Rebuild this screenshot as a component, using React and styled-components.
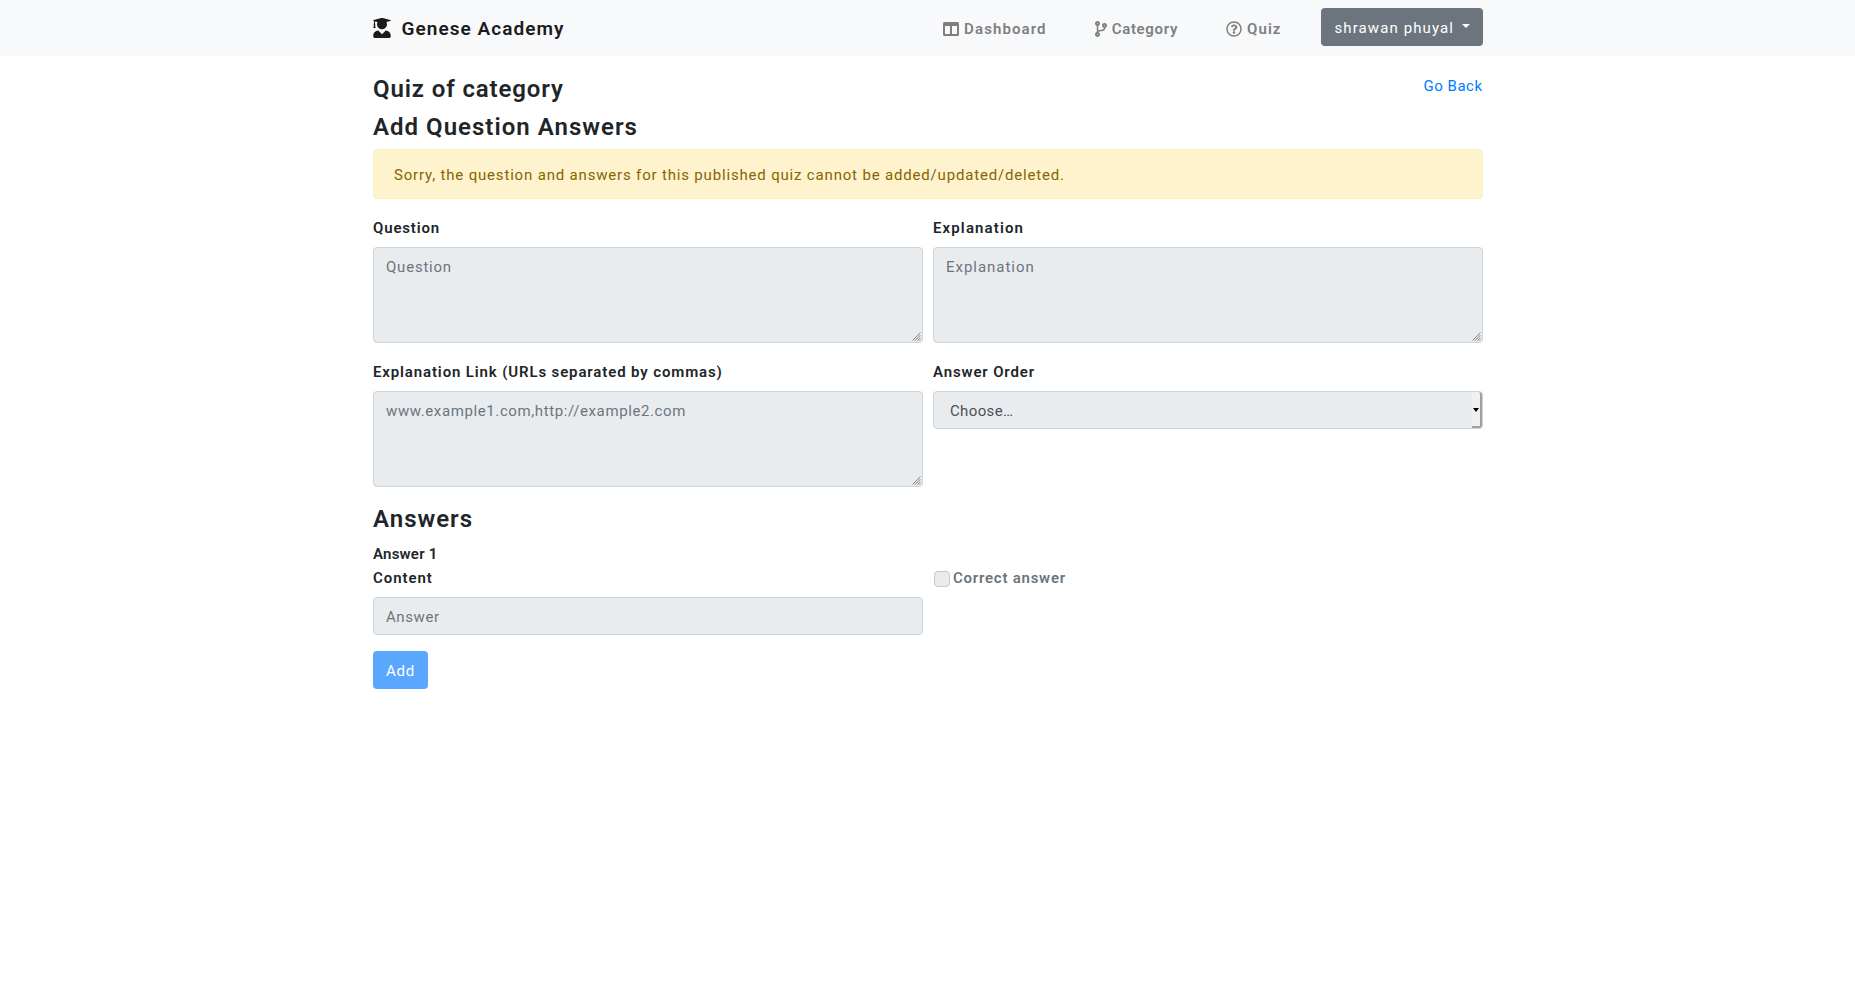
import React from "react";
import styled, { createGlobalStyle } from "styled-components";
import { FaUserGraduate, FaColumns, FaCodeBranch, FaRegQuestionCircle } from "react-icons/fa";

const GlobalStyle = createGlobalStyle`
  *, *::before, *::after { box-sizing: border-box; }
  body {
    margin: 0;
    background: #fff;
    color: #212529;
    font: 400 15px/24px Roboto, "Liberation Sans", sans-serif;
  }
  input, textarea, select, button { font: inherit; margin: 0; }
`;

const Navbar = styled.header`
  height: 56px;
  background: #f8f9fa;
`;

const Container = styled.div`
  width: 1109px;
  margin: 0 auto;
`;

const NavInner = styled(Container)`
  display: flex;
  align-items: flex-start;
  width: 1110px;
  height: 100%;
`;

const Brand = styled.a`
  display: flex;
  align-items: center;
  margin: 14px auto 0 0;
  height: 30px;
  gap: 10px;
  color: #1b1b1b;
  font-size: 19px;
  font-weight: 600;
  letter-spacing: 1.05px;

  svg { width: 20px; height: 20px; margin: -2px 0 0 -1px; }
`;

const NavLink = styled.a`
  display: flex;
  align-items: center;
  height: 24px;
  margin: 17px ${(p) => p.$after}px 0 0;
  gap: ${(p) => p.$gap}px;
  color: #7f7f7f;
  font-weight: 600;
  letter-spacing: ${(p) => p.$spacing}px;

  svg { width: ${(p) => p.$icon}px; height: 16px; margin-top: -1px; }
`;

const UserButton = styled.button`
  display: flex;
  align-items: center;
  width: 162px;
  height: 38px;
  margin-top: 8px;
  padding: 2px 13px 0 14px;
  border: 0;
  border-radius: 4px;
  background: #6c757d;
  color: #fff;
  letter-spacing: 1.1px;
  white-space: nowrap;
`;

const Caret = styled.span`
  margin: -5px 0 0 8px;
  border: 4.5px solid transparent;
  border-top-color: #fff;
  border-bottom: 0;
`;

const Page = styled(Container)`
  width: 1110px;
  padding: 16px 0 0 0.5px;
`;

const TitleRow = styled.div`
  display: flex;
  justify-content: space-between;
  height: 38px;
`;

const Heading = styled.h3`
  margin: 0;
  padding-top: ${(p) => p.$drop || 0}px;
  font-size: 24px;
  line-height: 33px;
  font-weight: 600;
  letter-spacing: ${(p) => p.$spacing}px;
`;

const BackLink = styled.a`
  margin-top: 2px;
  color: #007bff;
  letter-spacing: 0.5px;
`;

const Alert = styled.div`
  height: 50px;
  margin: 5px 0 16px;
  padding: 13px 20px 11px;
  border: 1px solid #ffeeba;
  border-radius: 4px;
  background: #fff3cd;
  color: #856404;
  letter-spacing: 0.823px;
`;

const FormRow = styled.div`
  display: grid;
  grid-template-columns: 550px 550px;
  column-gap: 10px;
  margin-bottom: 16px;
`;

const Label = styled.label`
  display: block;
  padding-top: 1px;
  margin-bottom: 7px;
  font-weight: 600;
  letter-spacing: ${(p) => p.$spacing}px;
`;

const ControlBox = styled.div`
  position: relative;
  display: flex;
`;

const TextArea = styled.textarea`
  display: block;
  width: 100%;
  height: 96px;
  padding: 7px 12px 5px;
  border: 1px solid #ced4da;
  border-radius: 4px;
  background: #e9ecef;
  resize: none;
  outline: 0;
  letter-spacing: ${(p) => p.$spacing}px;

  &::placeholder { color: #6c757d; opacity: 1; }
`;

const GripIcon = styled.svg`
  position: absolute;
  right: 2px;
  bottom: 2px;
  width: 9px;
  height: 9px;
`;

const Select = styled.select`
  width: 100%;
  height: 38px;
  padding: 7px 16px 5px;
  border: 1px solid #ced4da;
  border-radius: 4px;
  background: #e9ecef;
  color: #495057;
  opacity: 1;
  appearance: none;
  letter-spacing: 0.36px;
`;

const SelectArrow = styled.span`
  position: absolute;
  top: 1px;
  right: 1px;
  display: flex;
  align-items: center;
  justify-content: center;
  width: 10px;
  height: 36px;
  border-right: 2px solid #a0a0a0;
  border-bottom: 2px solid #a0a0a0;
  border-radius: 0 3px 3px 0;
  background: #f0f0f0;

  &::after {
    content: "";
    margin-top: 1px;
    border: 3px solid transparent;
    border-top: 4px solid #000;
    border-bottom: 0;
  }
`;

const AnswerTitle = styled.h6`
  margin: 8px 0 1px;
  font-size: 15px;
  line-height: 20px;
  font-weight: 600;
  letter-spacing: 0.22px;
`;

const TextInput = styled.input`
  display: block;
  width: 100%;
  height: 38px;
  padding: 7px 12px 5px;
  border: 1px solid #ced4da;
  border-radius: 4px;
  background: #e9ecef;
  letter-spacing: 0.58px;

  &::placeholder { color: #6c757d; opacity: 1; }
`;

const CheckLabel = styled.label`
  display: flex;
  align-items: center;
  height: 26px;
  gap: 3px;
  padding-left: 1px;
  color: #6c757d;
  font-weight: 600;
  letter-spacing: 0.76px;
`;

const CheckBox = styled.input`
  appearance: none;
  width: 16px;
  height: 16px;
  margin-top: 1px;
  border: 1px solid #c8c8c8;
  border-radius: 4px;
  background: #ebebeb;
`;

const AddButton = styled.button`
  width: 55px;
  height: 38px;
  padding: 1px 0 0;
  border: 0;
  border-radius: 4px;
  background: #59a7ff;
  color: #fff;
  letter-spacing: 0.7px;
`;

function Grip() {
  return (
    <GripIcon viewBox="0 0 9 9" fill="none" stroke="#85888b" strokeWidth="1">
      <path d="M0.5 8.5 8.5 0.5M3 8.5 8.5 3M5.5 8.5 8.5 5.5M7.5 8.5 8.5 7.5" />
    </GripIcon>
  );
}

function TextField({ label, labelSpacing, placeholder, spacing }) {
  return (
    <div>
      <Label $spacing={labelSpacing}>{label}</Label>
      <ControlBox>
        <TextArea disabled placeholder={placeholder} $spacing={spacing} />
        <Grip />
      </ControlBox>
    </div>
  );
}

export default function App() {
  return (
    <>
      <GlobalStyle />
      <Navbar>
        <NavInner>
          <Brand><FaUserGraduate />Genese Academy</Brand>
          <NavLink $icon={16} $gap={5} $after={47} $spacing={1.11}><FaColumns />Dashboard</NavLink>
          <NavLink $icon={14} $gap={4} $after={48} $spacing={0.68}><FaCodeBranch />Category</NavLink>
          <NavLink $icon={16} $gap={5} $after={39} $spacing={1.05}><FaRegQuestionCircle />Quiz</NavLink>
          <UserButton>shrawan phuyal<Caret /></UserButton>
        </NavInner>
      </Navbar>
      <Page as="main">
        <TitleRow>
          <Heading $drop={1} $spacing={0.88}>Quiz of category</Heading>
          <BackLink>Go Back</BackLink>
        </TitleRow>
        <Heading $drop={1} $spacing={1.02}>Add Question Answers</Heading>
        <Alert>Sorry, the question and answers for this published quiz cannot be added/updated/deleted.</Alert>
        <FormRow>
          <TextField label="Question" labelSpacing={0.84} placeholder="Question" spacing={0.78} />
          <TextField label="Explanation" labelSpacing={1.13} placeholder="Explanation" spacing={0.97} />
        </FormRow>
        <FormRow>
          <TextField
            label="Explanation Link (URLs separated by commas)"
            labelSpacing={0.87}
            placeholder="www.example1.com,http://example2.com"
            spacing={0.61}
          />
          <div>
            <Label $spacing={0.85}>Answer Order</Label>
            <ControlBox>
              <Select disabled defaultValue=""><option value="">Choose…</option></Select>
              <SelectArrow />
            </ControlBox>
          </div>
        </FormRow>
        <Heading $spacing={1}>Answers</Heading>
        <AnswerTitle>Answer 1</AnswerTitle>
        <FormRow>
          <div>
            <Label $spacing={0.94}>Content</Label>
            <TextInput disabled placeholder="Answer" />
          </div>
          <CheckLabel><CheckBox type="checkbox" disabled />Correct answer</CheckLabel>
        </FormRow>
        <AddButton>Add</AddButton>
      </Page>
    </>
  );
}
